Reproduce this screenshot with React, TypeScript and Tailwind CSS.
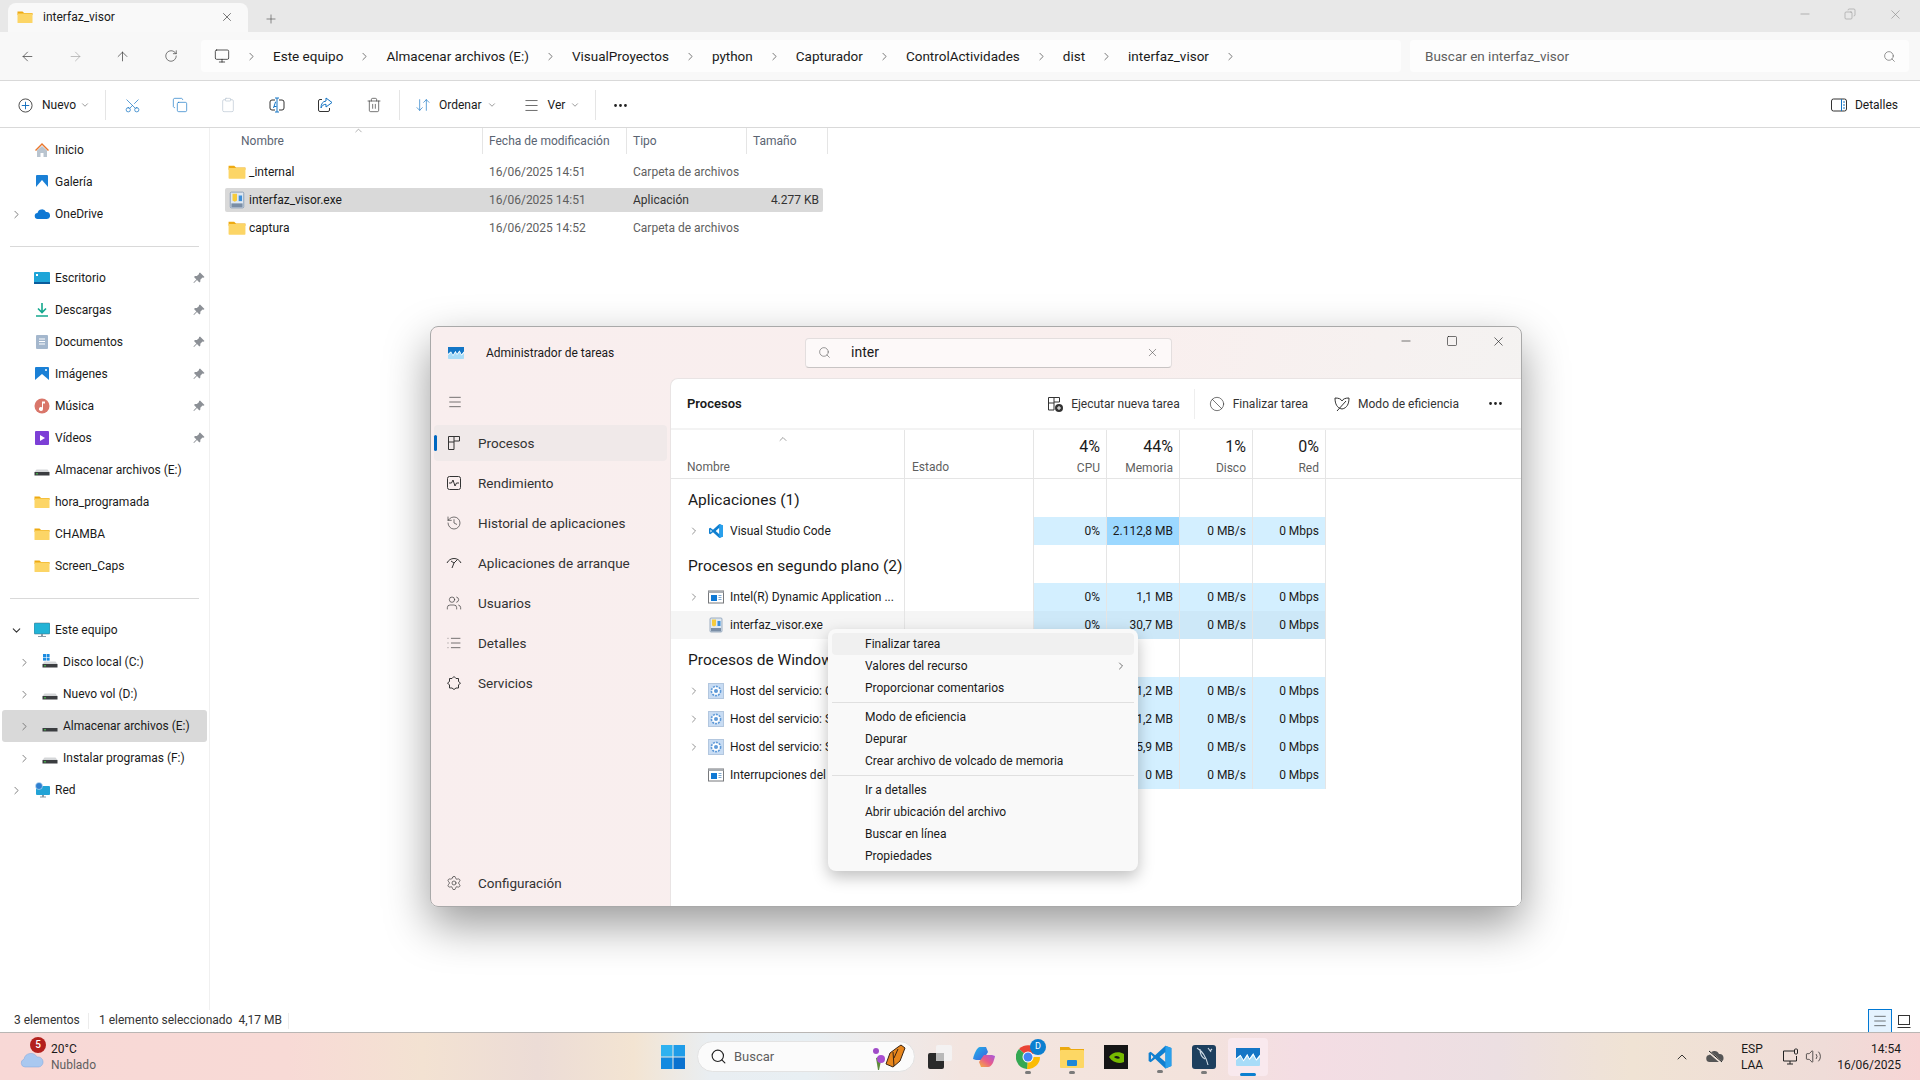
import {
  ArrowDownUp, ArrowLeft, ArrowRight, ArrowUp, Ban, ChevronDown, ChevronRight, ChevronUp, Clipboard, Copy, History,
  List, Menu, Minus, Monitor, MoreHorizontal, Plus, RotateCw, Scissors, Search, Settings, Square, Trash2, Users, Volume2, X,
} from "lucide-react";
import type { ReactNode } from "react";

function FolderIcon({ size = 16 }: { size?: number }) {
  return (
    <svg width={size} height={size} viewBox="0 0 16 16">
      <path d="M0.5 2.5h5l1.6 1.5h8.4v2h-15z" fill="#eeaa12" />
      <rect x="0.5" y="4.5" width="15" height="9.5" rx="0.6" fill="#fcd566" />
    </svg>
  );
}

function ExeIcon({ size = 16 }: { size?: number }) {
  return (
    <svg width={size} height={size} viewBox="0 0 16 16">
      <rect x="2" y="1" width="12" height="14" rx="1" fill="#dfe8f2" stroke="#7c93ad" strokeWidth="0.7" />
      <path d="M4 2.5h4v6l-2 1-2-1z" fill="#f6cb3c" />
      <rect x="3" y="11" width="10" height="3.4" fill="#7a8ea6" />
      <rect x="9.5" y="4" width="3" height="5" fill="#3f8fd8" />
    </svg>
  );
}

function VsCodeIcon({ size = 16 }: { size?: number }) {
  return (
    <svg width={size} height={size} viewBox="0 0 24 24">
      <path fillRule="evenodd" d="M17 1.5 7.5 10.3 3.4 7.2 1.5 8.2v7.6l1.9 1 4.1-3.1L17 22.5l5.5-2.3V3.8zM17 7.3 11.6 12l5.4 4.7zM3.7 9.6 6 12l-2.3 2.4z" fill="#0f7fd0" />
      <path d="M17 1.5 22.5 3.8v16.4L17 22.5z" fill="#29a0ec" />
    </svg>
  );
}

function ProcessIcon() {
  return (
    <svg width="16" height="16" viewBox="0 0 16 16">
      <rect x="0.5" y="2" width="15" height="12" fill="#fff" stroke="#77797c" />
      <rect x="0.5" y="2" width="15" height="2" fill="#a9adb2" />
      <rect x="3" y="6" width="6" height="6" fill="#0f78d4" />
      <path d="M10.5 6.5h3M10.5 8.5h3M10.5 10.5h3" stroke="#7fa7cc" />
    </svg>
  );
}

function ServiceIcon() {
  return (
    <svg width="16" height="16" viewBox="0 0 16 16">
      <rect x="0.5" y="0.5" width="15" height="15" fill="#c8dcf3" stroke="#b3c7df" />
      <circle cx="8" cy="8" r="4.6" fill="#fff" stroke="#5f9ad8" strokeWidth="1.6" strokeDasharray="2 1" />
      <circle cx="8" cy="8" r="2" fill="#5f9ad8" />
    </svg>
  );
}

function DriveIcon({ windows = false }: { windows?: boolean }) {
  return (
    <svg width="16" height="16" viewBox="0 0 16 16">
      {windows && (
        <g fill="#1b8be0">
          <rect x="1" y="0" width="3" height="3" />
          <rect x="4.6" y="0" width="3" height="3" />
          <rect x="1" y="3.6" width="3" height="3" />
          <rect x="4.6" y="3.6" width="3" height="3" />
        </g>
      )}
      <path d="M2.5 7.5h11l2 2.5H0.5z" fill="#d5d7d9" />
      <rect x="0.5" y="10" width="15" height="3.5" fill="#3b3d40" />
      <rect x="2" y="11.3" width="2" height="1" fill="#49d04d" />
    </svg>
  );
}

function TaskMgrIcon({ size = 16 }: { size?: number }) {
  return (
    <svg width={size} height={size * 0.75} viewBox="0 0 32 24">
      <rect width="32" height="24" rx="1.5" fill="#a8dcf8" />
      <path d="M0 0h32v9l-5 6-4-8-5 7-3-6-5 8-4-7-6 5z" fill="#1476c6" />
      <path d="M0 14l6-5 4 7 5-8 3 6 5-7 4 8 5-6v3l-5 5-4-7-5 6-3-5-5 7-4-7-6 5z" fill="#fff" />
    </svg>
  );
}

function TreeRow({
  label, icon, level = 1, pinned, selected, open, arrow,
}: { label: string; icon: ReactNode; level?: 1 | 2; pinned?: boolean; selected?: boolean; open?: boolean; arrow?: boolean }) {
  return (
    <div className={`mx-[2px] flex h-8 items-center rounded-[3px] pr-[2px] ${level === 2 ? "pl-[14px]" : "pl-[6px]"} ${selected ? "bg-[#d9d9d9]" : ""}`}>
      <span className="flex w-4 justify-center text-[#6e6e6e]">
        {arrow && (open ? <ChevronDown size={13} strokeWidth={2} className="text-[#333]" /> : <ChevronRight size={13} strokeWidth={1.6} />)}
      </span>
      <span className="ml-[10px] flex w-4 justify-center">{icon}</span>
      <span className="ml-[5px] flex-1 text-xs text-[#1a1a1a]">{label}</span>
      {pinned && (
        <svg width="12" height="12" viewBox="0 0 12 12" fill="#8c9096">
          <path d="M7 0.5 11.5 5l-1 .8-1-.3L7.3 7.7 7.4 9.6 6.4 10.6 4 8 1 11l-.6-.6L3.4 7.4 1 5 2 4l1.9.1L6.1 2l-.2-.7z" />
        </svg>
      )}
    </div>
  );
}

function ToolbarDivider() {
  return <div className="h-[30px] w-px bg-[#e5e5e5]" />;
}

const crumbs = ["Este equipo", "Almacenar archivos (E:)", "VisualProyectos", "python", "Capturador", "ControlActividades", "dist", "interfaz_visor"];

const files = [
  { name: "_internal", date: "16/06/2025 14:51", type: "Carpeta de archivos", size: "", exe: false },
  { name: "interfaz_visor.exe", date: "16/06/2025 14:51", type: "Aplicación", size: "4.277 KB", exe: true },
  { name: "captura", date: "16/06/2025 14:52", type: "Carpeta de archivos", size: "", exe: false },
];

function Explorer() {
  return (
    <div className="flex min-h-0 flex-1 flex-col bg-white">
      <div className="flex h-8 items-end bg-[#e8e8e8] pl-2">
        <div className="flex h-[29px] w-[240px] items-center rounded-t-lg bg-[#f9f9f9] pb-[2px] pl-[9px] pr-[14px]">
          <FolderIcon />
          <span className="ml-[10px] flex-1 text-xs">interfaz_visor</span>
          <X size={14} strokeWidth={1} />
        </div>
        <div className="mb-[6px] ml-4 text-[#444]"><Plus size={14} strokeWidth={1} /></div>
        <div className="mb-[6px] ml-auto flex h-6 items-center gap-8 pr-[17px] text-[#8a8a8a]">
          <Minus size={14} strokeWidth={1} />
          <Copy size={12} strokeWidth={1} className="-scale-x-100" />
          <X size={15} strokeWidth={1} />
        </div>
      </div>

      <div className="flex h-[49px] items-center border-b border-[#d9d9d9] bg-[#f8f8f8]">
        <div className="flex w-[201px] items-center pl-5 text-[#333]">
          <ArrowLeft size={15} strokeWidth={1.1} />
          <ArrowRight size={15} strokeWidth={1.1} className="ml-[33px] text-[#a3a3a3]" />
          <ArrowUp size={15} strokeWidth={1.1} className="ml-[32px]" />
          <RotateCw size={14} strokeWidth={1.1} className="ml-[34px]" />
        </div>
        <div className="flex h-8 w-[1200px] items-center rounded bg-[#fdfdfd] pl-[13px]">
          <Monitor size={16} strokeWidth={1.1} />
          {crumbs.map((c) => (
            <div key={c} className="flex items-center">
              <ChevronRight size={13} strokeWidth={1.2} className="mx-[15px] text-[#333]" />
              <span className="text-[13.5px] text-[#1a1a1a]">{c}</span>
            </div>
          ))}
          <ChevronRight size={13} strokeWidth={1.2} className="mx-[15px] text-[#333]" />
        </div>
        <div className="ml-[9px] flex h-8 w-[499px] items-center justify-between rounded bg-[#fdfdfd] pl-[15px] pr-[13px] text-[#5f5f5f]">
          <span className="text-[13.5px]">Buscar en interfaz_visor</span>
          <Search size={13} strokeWidth={1.2} />
        </div>
      </div>

      <div className="flex h-[47px] items-center border-b border-[#d9d9d9] pl-[18px] pr-[22px] pt-[2px]">
        <svg width="15" height="15" viewBox="0 0 16 16" fill="none" stroke="#0f6cbd" strokeWidth="1"><circle cx="8" cy="8" r="7" stroke="#444" /><path d="M8 4v8M4 8h8" /></svg>
        <span className="ml-[9px] text-xs">Nuevo</span>
        <ChevronDown size={10} className="ml-[4px] text-[#888]" />
        <div className="ml-[15px]"><ToolbarDivider /></div>
        <Scissors size={17} strokeWidth={1} className="ml-[18px] -rotate-90 text-[#1474c4]" />
        <Copy size={16} strokeWidth={1} className="ml-[31px] text-[#1474c4]" />
        <Clipboard size={16} strokeWidth={1} className="ml-[32px] text-[#b9c6d2]" />
        <svg width="16" height="16" viewBox="0 0 16 16" fill="none" stroke="#333" strokeWidth="1" className="ml-[33px]"><path d="M6 3H3a2 2 0 0 0-2 2v6a2 2 0 0 0 2 2h3M10 3h3a2 2 0 0 1 2 2v6a2 2 0 0 1-2 2h-3" /><path d="M8 1v14M6 1h4M6 15h4" stroke="#1474c4" /><path d="M4.500 11 6.500 5h.5M5 9.500h2.500" stroke="#1474c4" /></svg>
        <svg width="16" height="16" viewBox="0 0 16 16" fill="none" stroke="#333" strokeWidth="1" className="ml-[32px]"><path d="M5 2.500H3a1.500 1.500 0 0 0-1.500 1.500v9A1.500 1.500 0 0 0 3 14.500h8a1.500 1.500 0 0 0 1.500-1.500v-2" /><path d="M9 1l6 4.500L9 10V7.300C6.500 7.300 5 8.500 4 11c0-4 1.500-6.500 5-7z" stroke="#1474c4" /></svg>
        <Trash2 size={16} strokeWidth={1} className="ml-[33px] text-[#333]" />
        <div className="ml-[17px]"><ToolbarDivider /></div>
        <ArrowDownUp size={16} strokeWidth={1} className="ml-[15px] text-[#1474c4]" />
        <span className="ml-[8px] text-xs">Ordenar</span>
        <ChevronDown size={10} className="ml-[5px] text-[#888]" />
        <Menu size={17} strokeWidth={1} className="ml-[26px] text-[#333]" />
        <span className="ml-[8px] text-xs">Ver</span>
        <ChevronDown size={10} className="ml-[5px] text-[#888]" />
        <div className="ml-[15px]"><ToolbarDivider /></div>
        <MoreHorizontal size={17} strokeWidth={2} className="ml-[16px] text-[#222]" />
        <div className="ml-auto flex items-center">
          <svg width="16" height="16" viewBox="0 0 16 16" fill="none" stroke="#333"><rect x="0.5" y="2" width="15" height="12" rx="2" /><path d="M10.5 2v12" stroke="#1474c4" /><path d="M12 5h2M12 8h2M12 11h2" stroke="#1474c4" /></svg>
          <span className="ml-[8px] text-xs">Detalles</span>
        </div>
      </div>

      <div className="flex min-h-0 flex-1">
        <div className="w-[210px] border-r border-[#f0f0f0] pt-[6px]">
          <TreeRow label="Inicio" icon={<svg width="16" height="16" viewBox="0 0 16 16"><path d="M8 1 1 8l1 1 6-6 6 6 1-1z" fill="#e8762c" /><path d="M3 8.5 8 4l5 4.5V15H9.5v-4h-3v4H3z" fill="#b9c4cf" /></svg>} />
          <TreeRow label="Galería" icon={<svg width="16" height="16" viewBox="0 0 16 16"><rect x="2" y="1" width="12" height="14" rx="1" fill="#1a80d6" /><path d="M2 13 8 6l6 7v2H2z" fill="#fff" /></svg>} />
          <TreeRow label="OneDrive" arrow icon={<svg width="16" height="16" viewBox="0 0 16 16"><path d="M4 13a3 3 0 0 1-.5-6A4.5 4.5 0 0 1 12 6a3.5 3.5 0 0 1 1 7z" fill="#0f78d4" /></svg>} />
          <div className="mx-[10px] mb-[15px] mt-4 h-px bg-[#d9d9d9]" />
          <TreeRow label="Escritorio" pinned icon={<svg width="16" height="16" viewBox="0 0 16 16"><rect y="2" width="16" height="12" rx="1" fill="#1ea5d8" /><rect y="12" width="16" height="2" fill="#0a5c9c" /><rect x="2" y="4" width="2" height="2" fill="#fff" /></svg>} />
          <TreeRow label="Descargas" pinned icon={<svg width="16" height="16" viewBox="0 0 16 16" fill="none" stroke="#14a88e" strokeWidth="1.6"><path d="M8 1v9M4 6.5 8 10.5l4-4M2 14h12" /></svg>} />
          <TreeRow label="Documentos" pinned icon={<svg width="16" height="16" viewBox="0 0 16 16"><rect x="2" y="1" width="12" height="14" rx="1" fill="#a4b7cd" /><path d="M5 5h6M5 7.500h6M5 10h6" stroke="#fff" /></svg>} />
          <TreeRow label="Imágenes" pinned icon={<svg width="16" height="16" viewBox="0 0 16 16"><rect x="1" y="1" width="14" height="14" rx="1" fill="#1a80d6" /><path d="M1 14 8 8l7 6v1H1z" fill="#fff" /><circle cx="12" cy="4" r="1" fill="#fff" /></svg>} />
          <TreeRow label="Música" pinned icon={<svg width="16" height="16" viewBox="0 0 16 16"><circle cx="8" cy="8" r="7.500" fill="#d9766a" /><path d="M8 3.500h3v2H9v5.500a2 2 0 1 1-1-1.700z" fill="#fff" /></svg>} />
          <TreeRow label="Vídeos" pinned icon={<svg width="16" height="16" viewBox="0 0 16 16"><rect x="1" y="1" width="14" height="14" rx="1" fill="#7c3fd6" /><path d="M6 5v6l5-3z" fill="#fff" /></svg>} />
          <TreeRow label="Almacenar archivos (E:)" icon={<DriveIcon />} />
          <TreeRow label="hora_programada" icon={<FolderIcon />} />
          <TreeRow label="CHAMBA" icon={<FolderIcon />} />
          <TreeRow label="Screen_Caps" icon={<FolderIcon />} />
          <div className="mx-[10px] mb-[15px] mt-4 h-px bg-[#d9d9d9]" />
          <TreeRow label="Este equipo" arrow open icon={<svg width="16" height="16" viewBox="0 0 16 16"><rect y="1" width="16" height="11" rx="1" fill="#22b3d6" stroke="#4b6b7a" strokeWidth="0.5" /><path d="M7 12h2v2h3v1H4v-1h3z" fill="#8a9aa5" /></svg>} />
          <TreeRow label="Disco local (C:)" level={2} arrow icon={<DriveIcon windows />} />
          <TreeRow label="Nuevo vol (D:)" level={2} arrow icon={<DriveIcon />} />
          <TreeRow label="Almacenar archivos (E:)" level={2} arrow selected icon={<DriveIcon />} />
          <TreeRow label="Instalar programas (F:)" level={2} arrow icon={<DriveIcon />} />
          <TreeRow label="Red" arrow icon={<svg width="16" height="16" viewBox="0 0 16 16"><rect x="2" y="4" width="14" height="9" rx="1" fill="#22a3d6" /><path d="M8 13h2v1.500h2v1H6v-1h2z" fill="#8a9aa5" /><circle cx="5" cy="4" r="3.500" fill="#2f7fd0" stroke="#cfe8f7" strokeWidth="0.6" /></svg>} />
        </div>

        <div className="relative flex-1">
          <ChevronUp size={11} strokeWidth={1} className="absolute left-[143px] top-[-3px] text-[#555]" />
          <div className="flex h-[26px] text-xs text-[#5a6472]">
            <div className="w-[273px] border-r border-[#e5e5e5] pl-[31px] leading-[26px]">Nombre</div>
            <div className="w-[144px] border-r border-[#e5e5e5] pl-[6px] leading-[26px]">Fecha de modificación</div>
            <div className="w-[120px] border-r border-[#e5e5e5] pl-[6px] leading-[26px]">Tipo</div>
            <div className="w-[81px] border-r border-[#e5e5e5] pl-[6px] leading-[26px]">Tamaño</div>
          </div>
          <div className="ml-[15px] mt-[6px] flex w-[598px] flex-col gap-1">
            {files.map((f) => (
              <div key={f.name} className={`flex h-6 items-center rounded-[2px] text-xs ${f.exe ? "bg-[#d9d9d9]" : ""}`}>
                <div className="flex w-[264px] items-center gap-[3px] pl-[3px] text-[#1a1a1a]">
                  {f.exe ? <ExeIcon size={18} /> : <FolderIcon size={18} />}
                  <span>{f.name}</span>
                </div>
                <div className="w-[144px] text-[#5f5f5f]">{f.date}</div>
                <div className={`w-[120px] ${f.exe ? "text-[#333]" : "text-[#5f5f5f]"}`}>{f.type}</div>
                <div className="w-[66px] text-right text-[#333]">{f.size}</div>
              </div>
            ))}
          </div>
        </div>
      </div>

      <div className="flex h-[22px] items-center text-xs text-[#333]">
        <span className="mb-[2px] ml-[14px] w-[74px] whitespace-nowrap">3 elementos</span>
        <div className="h-4 w-px bg-[#ececec]" />
        <span className="mb-[2px] ml-[10px] w-[179px] whitespace-nowrap">1 elemento seleccionado&nbsp; 4,17 MB</span>
        <div className="ml-[10px] h-4 w-px bg-[#ececec]" />
        <div className="ml-auto flex items-center pr-2">
          <div className="flex h-6 w-6 items-center justify-center border border-[#0078d4] bg-[#e5f3ff]">
            <Menu size={16} strokeWidth={1} className="text-[#333]" />
          </div>
          <svg width="16" height="16" viewBox="0 0 16 16" fill="none" stroke="#333" className="ml-[4px]"><rect x="2.500" y="2.500" width="11" height="9" /><path d="M1.500 14.500h13" /></svg>
        </div>
      </div>
    </div>
  );
}

const navItems = [
  { label: "Procesos", active: true, icon: <svg width="16" height="16" viewBox="0 0 16 16" fill="none" stroke="#333"><path d="M2.500 1.500h11v4.500h-5.500v8.500h-5.500zM2.500 7h5.500M8 1.500v4.500" /></svg> },
  { label: "Rendimiento", icon: <svg width="16" height="16" viewBox="0 0 16 16" fill="none" stroke="#333"><rect x="1.500" y="1.500" width="13" height="13" rx="2" /><path d="M3 8h2.500l1.500-3 2 6 1.500-3H13" /></svg> },
  { label: "Historial de aplicaciones", icon: <History size={16} strokeWidth={1} /> },
  { label: "Aplicaciones de arranque", icon: <svg width="16" height="16" viewBox="0 0 16 16" fill="none" stroke="#333"><path d="M1 8c1.500-3 4-4.500 7-4.500S13.500 5 15 8M5 6l3 2 3-3M8 8l-2 5" /></svg> },
  { label: "Usuarios", icon: <Users size={16} strokeWidth={1} /> },
  { label: "Detalles", icon: <List size={16} strokeWidth={1} /> },
  { label: "Servicios", icon: <svg width="16" height="16" viewBox="0 0 16 16" fill="none" stroke="#333"><path d="M8 1.500 10 3.500h2.500v3L14.500 8l-2 2v3H10l-2 1.500L6 13H3.500v-3L1.500 8l2-1.500v-3H6z" /></svg> },
];

type ProcRow = { name: string; icon: ReactNode; arrow: boolean; cpu: string; mem: string; disk: string; net: string; hot?: boolean; hover?: boolean };

const rowGroups: { title: string; rows: ProcRow[] }[] = [
  { title: "Aplicaciones (1)", rows: [{ name: "Visual Studio Code", icon: <VsCodeIcon />, arrow: true, cpu: "0%", mem: "2.112,8 MB", disk: "0 MB/s", net: "0 Mbps", hot: true }] },
  {
    title: "Procesos en segundo plano (2)",
    rows: [
      { name: "Intel(R) Dynamic Application ...", icon: <ProcessIcon />, arrow: true, cpu: "0%", mem: "1,1 MB", disk: "0 MB/s", net: "0 Mbps" },
      { name: "interfaz_visor.exe", icon: <ExeIcon />, arrow: false, cpu: "0%", mem: "30,7 MB", disk: "0 MB/s", net: "0 Mbps", hover: true },
    ],
  },
  {
    title: "Procesos de Windows (4)",
    rows: [
      { name: "Host del servicio: Capability Access", icon: <ServiceIcon />, arrow: true, cpu: "0%", mem: "1,2 MB", disk: "0 MB/s", net: "0 Mbps" },
      { name: "Host del servicio: Sistema", icon: <ServiceIcon />, arrow: true, cpu: "0%", mem: "1,2 MB", disk: "0 MB/s", net: "0 Mbps" },
      { name: "Host del servicio: Sysmain", icon: <ServiceIcon />, arrow: true, cpu: "0%", mem: "5,9 MB", disk: "0 MB/s", net: "0 Mbps" },
      { name: "Interrupciones del sistema", icon: <ProcessIcon />, arrow: false, cpu: "0%", mem: "0 MB", disk: "0 MB/s", net: "0 Mbps" },
    ],
  },
];

function HeadMetric({ pct, label }: { pct: string; label: string }) {
  return (
    <div className="flex w-[73px] flex-col items-end border-r border-[#e5e5e5] pr-[6px] pt-[7px]">
      <span className="text-base leading-5 text-[#1a1a1a]">{pct}</span>
      <span className="mt-[1px] text-xs leading-5 text-[#5f5f5f]">{label}</span>
    </div>
  );
}

function MetricCell({ value, hot, hover }: { value: string; hot?: boolean; hover?: boolean }) {
  const bg = hot ? "bg-[#9cd8ff]" : hover ? "bg-[#cde8f8]" : "bg-[#d3efff]";
  return <div className={`flex w-[73px] items-center justify-end border-r border-[#e5e5e5] pr-[6px] ${bg}`}>{value}</div>;
}

function ContextMenu() {
  const item = "flex h-[22px] items-center rounded pl-[33px] text-xs text-[#1a1a1a]";
  const sep = "my-[3px] h-px bg-[#e0e0e0]";
  return (
    <div className="absolute left-[397px] top-[302px] h-[242px] w-[310px] rounded-lg bg-[#f9f9f9] p-1 shadow-[0_6px_16px_rgba(0,0,0,0.25)]">
      <div className={`${item} bg-[#f0f0f0]`}>Finalizar tarea</div>
      <div className={`${item} justify-between pr-[7px]`}>Valores del recurso<ChevronRight size={12} strokeWidth={1.2} /></div>
      <div className={item}>Proporcionar comentarios</div>
      <div className={sep} />
      <div className={item}>Modo de eficiencia</div>
      <div className={item}>Depurar</div>
      <div className={item}>Crear archivo de volcado de memoria</div>
      <div className={sep} />
      <div className={item}>Ir a detalles</div>
      <div className={item}>Abrir ubicación del archivo</div>
      <div className={item}>Buscar en línea</div>
      <div className={item}>Propiedades</div>
    </div>
  );
}

function TaskManager() {
  return (
    <div className="absolute left-[430px] top-[326px] flex h-[581px] w-[1092px] flex-col overflow-hidden rounded-lg border border-[#a9a9a9] bg-[linear-gradient(100deg,#f9eeee_0%,#f9efee_60%,#f3f3f2_100%)] shadow-[0_18px_45px_rgba(0,0,0,0.4)]">
      <div className="flex h-[51px] shrink-0 items-center">
        <div className="ml-[17px]"><TaskMgrIcon size={16} /></div>
        <span className="ml-[22px] w-[319px] text-xs text-[#1a1a1a]">Administrador de tareas</span>
        <div className="flex h-[30px] w-[367px] items-center rounded border border-[#e3dede] border-b-[#c8c4c4] bg-[#fdf9f9] pl-3 pr-3">
          <Search size={13} strokeWidth={1.2} className="text-[#666]" />
          <span className="mb-px ml-5 flex-1 text-sm text-[#1a1a1a]">inter</span>
          <X size={13} strokeWidth={1} className="text-[#444]" />
        </div>
        <div className="mb-[22px] ml-auto flex text-[#1a1a1a]">
          <div className="flex w-[46px] justify-center"><Minus size={14} strokeWidth={1} /></div>
          <div className="flex w-[46px] justify-center"><Square size={12} strokeWidth={1.2} className="my-px" /></div>
          <div className="flex w-[46px] justify-center"><X size={15} strokeWidth={1} /></div>
        </div>
      </div>

      <div className="flex min-h-0 flex-1">
        <div className="flex w-[239px] shrink-0 flex-col pb-[5px] text-[13.5px] text-[#333]">
          <div className="flex h-[47px] items-center pl-[16px]"><Menu size={16} strokeWidth={1} /></div>
          <div className="flex flex-col gap-1">
            {navItems.map((n) => (
              <div key={n.label} className={`relative mx-[3px] flex h-9 items-center gap-4 rounded pl-3 ${n.active ? "bg-[#f0e9e9]" : ""}`}>
                {n.active && <div className="absolute left-0 top-[10px] h-4 w-[3px] rounded bg-[#0067c0]" />}
                {n.icon}
                <span>{n.label}</span>
              </div>
            ))}
          </div>
          <div className="mx-[3px] mt-auto flex h-9 items-center gap-4 pl-3">
            <Settings size={16} strokeWidth={1} />
            <span>Configuración</span>
          </div>
        </div>

        <div className="flex min-w-0 flex-1 flex-col rounded-tl-lg border-l border-t border-[#e9e4e4] bg-white">
          <div className="flex h-[49px] shrink-0 items-center whitespace-nowrap pl-4 pr-[17px] text-xs text-[#333]">
            <span className="flex-1 text-[13px] font-semibold text-[#1a1a1a]">Procesos</span>
            <svg width="16" height="16" viewBox="0 0 16 16" fill="none" stroke="#333"><path d="M1.500 1.500h11v4.500h-5.500v8h-5.500zM1.500 7h5.500M7 1.500V6" /><circle cx="12" cy="12" r="4" fill="#333" stroke="none" /><path d="M12 10v4M10 12h4" stroke="#fff" /></svg>
            <span className="ml-2">Ejecutar nueva tarea</span>
            <div className="ml-[14px] h-[30px] w-px bg-[#eee]" />
            <Ban size={16} strokeWidth={1} className="ml-[14px]" />
            <span className="ml-2">Finalizar tarea</span>
            <svg width="16" height="16" viewBox="0 0 16 16" fill="none" stroke="#333" className="ml-[26px]"><path d="M1 2c4 0 6 1 7 3 1-2 3-3 7-3 0 6-2 10-7 11C3 12 1 8 1 2zM3 15 12 5" /></svg>
            <span className="ml-2">Modo de eficiencia</span>
            <MoreHorizontal size={17} strokeWidth={2} className="ml-[28px] text-[#222]" />
          </div>
          <div className="h-[2px] shrink-0 bg-[#f3f3f3]" />

          <div className="flex h-[49px] shrink-0 border-b border-[#e5e5e5] text-xs text-[#5f5f5f]">
            <div className="relative flex w-[234px] items-end border-r border-[#e5e5e5] pb-[3px] pl-4">
              <ChevronUp size={12} strokeWidth={1.2} className="absolute left-[106px] top-[3px]" />
              Nombre
            </div>
            <div className="flex w-[129px] items-end border-r border-[#e5e5e5] pb-[3px] pl-[7px]">Estado</div>
            <HeadMetric pct="4%" label="CPU" />
            <HeadMetric pct="44%" label="Memoria" />
            <HeadMetric pct="1%" label="Disco" />
            <HeadMetric pct="0%" label="Red" />
          </div>

          {rowGroups.map((g) => (
            <div key={g.title}>
              <div className="flex h-[38px]">
                <div className="w-[234px] whitespace-nowrap border-r border-[#e5e5e5] pl-[17px] pt-[11px] text-[15.5px] leading-5 text-[#1a1a1a]">{g.title}</div>
                <div className="w-[129px] border-r border-[#e5e5e5]" />
                <div className="w-[73px] border-r border-[#e5e5e5]" />
                <div className="w-[73px] border-r border-[#e5e5e5]" />
                <div className="w-[73px] border-r border-[#e5e5e5]" />
                <div className="w-[73px] border-r border-[#e5e5e5]" />
              </div>
              {g.rows.map((r) => (
                <div key={r.name} className="flex h-7 text-xs text-[#1a1a1a]">
                  <div className={`flex w-[363px] items-center ${r.hover ? "bg-[#f5f5f5]" : ""}`}>
                    <div className="flex w-[234px] items-center self-stretch border-r border-[#e5e5e5] pl-[17px]">
                      <span className="flex w-3 justify-center text-[#666]">{r.arrow && <ChevronRight size={12} strokeWidth={1.4} />}</span>
                      <span className="ml-[8px] flex">{r.icon}</span>
                      <span className="ml-[6px] truncate">{r.name}</span>
                    </div>
                    <div className="h-full w-[129px] border-r border-[#e5e5e5]" />
                  </div>
                  <MetricCell value={r.cpu} hover={r.hover} />
                  <MetricCell value={r.mem} hot={r.hot} hover={r.hover} />
                  <MetricCell value={r.disk} hover={r.hover} />
                  <MetricCell value={r.net} hover={r.hover} />
                </div>
              ))}
            </div>
          ))}
        </div>
      </div>
      <ContextMenu />
    </div>
  );
}

function Taskbar() {
  return (
    <div className="flex h-[48px] shrink-0 items-center border-t border-[#b9b6b4] bg-[linear-gradient(90deg,#f8d8d6_0%,#f8dad6_15%,#f3e2d2_22%,#ecdcd6_28%,#f3e4d2_33%,#e9eef2_37%,#e8eff3_42%,#f3e5e0_50%,#f3e3dc_62%,#f4dde4_68%,#ecdfe2_78%,#f0e3d4_85%,#efdcd8_95%,#f7d5d5_100%)]">
      <div className="relative ml-[20px] w-[31px]">
        <svg width="24" height="18" viewBox="0 0 24 18" className="mt-[6px]"><path d="M5 16a4 4 0 0 1-1-7.800A7 7 0 0 1 17 6a5 5 0 0 1 2 10z" fill="#a9c8f0" stroke="#7fa6dc" strokeWidth="0.5" /></svg>
        <span className="absolute left-[10px] top-[-8px] flex h-4 w-4 items-center justify-center rounded-full bg-[#b3201d] text-[10px] font-medium text-white">5</span>
      </div>
      <div className="flex flex-col text-xs leading-4">
        <span className="text-[#1a1a1a]">20°C</span>
        <span className="text-[#5f5f5f]">Nublado</span>
      </div>

      <svg width="24" height="24" viewBox="0 0 24 24" className="ml-[565px]">
        <rect width="11.500" height="11.500" fill="#2fb2f0" />
        <rect x="12.500" width="11.500" height="11.500" fill="#1f9ce8" />
        <rect y="12.500" width="11.500" height="11.500" fill="#128ae0" />
        <rect x="12.500" y="12.500" width="11.500" height="11.500" fill="#0b72cf" />
      </svg>

      <div className="ml-3 flex h-[31px] w-[218px] items-center rounded-full border border-[#e3e3e3] bg-[#fbfbfb] pl-[12px] pr-[8px]">
        <Search size={17} strokeWidth={1.6} className="text-[#222]" />
        <span className="ml-[7px] flex-1 text-[13px] text-[#5f5f5f]">Buscar</span>
        <svg width="38" height="26" viewBox="0 0 38 26">
          <path d="M8 14l3-1 2 4-2 9h-1z" fill="#5e8a3a" />
          <circle cx="8" cy="7" r="3" fill="#a04cc8" /><circle cx="13" cy="15" r="4" fill="#a94fd0" />
          <path d="M18 20 22 9l8-6 3-2 4 3-5 13-7 6z" fill="#e7861c" stroke="#3a2414" />
          <path d="M25 8l1 14M30 5l-4 9" stroke="#3a2414" />
        </svg>
      </div>

      <div className="ml-[3px] flex items-center">
        <div className="flex w-[44px] justify-center">
          <div className="relative h-[24px] w-[24px]">
            <div className="absolute right-0 top-0 h-4 w-4 rounded-[2px] bg-[#f4f2f2]" />
            <div className="absolute bottom-0 left-0 h-4 w-4 rounded-[2px] bg-[#2a2a2a]" />
            <div className="absolute left-2 top-2 h-2 w-2 bg-[#b9b9b9]" />
          </div>
        </div>
        <div className="flex w-[44px] justify-center">
          <svg width="24" height="24" viewBox="0 0 24 24">
            <defs>
              <linearGradient id="cp1" x1="0" y1="0" x2="1" y2="1"><stop offset="0" stopColor="#1fb5e8" /><stop offset="1" stopColor="#3f5fe0" /></linearGradient>
              <linearGradient id="cp2" x1="0" y1="1" x2="1" y2="0"><stop offset="0" stopColor="#f6b33c" /><stop offset="0.5" stopColor="#e85a8a" /><stop offset="1" stopColor="#a45ae0" /></linearGradient>
            </defs>
            <path d="M8 2h6l2 5-5 8H4l-3-1C2 9 5 2 8 2z" fill="url(#cp1)" />
            <path d="M16 22h-7l-2-5 5-7h8l3 1c-1 5-3 11-7 11z" fill="url(#cp2)" />
          </svg>
        </div>
        <div className="relative flex w-[44px] justify-center">
          <svg width="24" height="24" viewBox="0 0 24 24">
            <path d="M12 12 3 4a12 12 0 0 1 19 2z" fill="#ea4335" />
            <path d="M12 12H24A12 12 0 0 1 11 24z" fill="#fbbc04" />
            <path d="M12 12 11 24A12 12 0 0 1 3 4z" fill="#34a853" />
            <circle cx="12" cy="12" r="5.500" fill="#fff" /><circle cx="12" cy="12" r="4.500" fill="#4285f4" />
          </svg>
          <span className="absolute left-[24px] top-[-6px] flex h-4 w-4 items-center justify-center rounded-full bg-[#0b7fd0] text-[9px] text-white">D</span>
          <span className="absolute top-[26px] h-[3px] w-[6px] rounded-full bg-[#7a7a7a]" />
        </div>
        <div className="relative flex w-[44px] justify-center">
          <svg width="24" height="24" viewBox="0 0 24 24">
            <path d="M0 2h9l2 2h13v4H0z" fill="#eca90f" /><rect y="5" width="24" height="18" rx="1" fill="#fdd764" /><rect x="7" y="15" width="10" height="6" rx="1" fill="#1e88d8" />
          </svg>
          <span className="absolute top-[26px] h-[3px] w-[6px] rounded-full bg-[#7a7a7a]" />
        </div>
        <div className="flex w-[44px] justify-center">
          <svg width="24" height="24" viewBox="0 0 24 24"><rect width="24" height="24" fill="#151515" /><path d="M5 12c3-5 10-6 15-3v8c-5 2-11 1-15-5zm5 0c2 2 5 2 6 1-1-2-4-3-6-1z" fill="#76b900" fillRule="evenodd" /></svg>
        </div>
        <div className="relative flex w-[44px] justify-center">
          <VsCodeIcon size={26} />
          <span className="absolute top-[26px] h-[3px] w-[6px] rounded-full bg-[#7a7a7a]" />
        </div>
        <div className="relative flex w-[44px] justify-center">
          <svg width="24" height="24" viewBox="0 0 24 24"><rect width="24" height="24" rx="3" fill="#1d3f5e" /><path d="M5 3c5 3 9 8 11 17M8 4c0 6 3 9 5 10M16 3l3 4M20 4l-2 2" fill="none" stroke="#cfdbe5" strokeWidth="1.1" /></svg>
          <span className="absolute top-[26px] h-[3px] w-[6px] rounded-full bg-[#7a7a7a]" />
        </div>
        <div className="flex w-[44px] justify-center">
          <div className="relative flex h-[38px] w-[40px] items-center justify-center rounded bg-[#f9e9ee]">
            <TaskMgrIcon size={24} />
            <span className="absolute bottom-0 h-[3px] w-4 rounded-full bg-[#0b7fd0]" />
          </div>
        </div>
      </div>

      <div className="ml-auto flex items-center pr-[19px] text-xs text-[#1a1a1a]">
        <ChevronUp size={16} strokeWidth={1.3} />
        <svg width="18" height="14" viewBox="0 0 18 14" className="ml-[16px]"><path d="M4 12a3.500 3.500 0 0 1-.5-7A5 5 0 0 1 13 4a4 4 0 0 1 1 8z" fill="#555" /><path d="M2 1l14 12" stroke="#f1e5dc" strokeWidth="2.500" /><path d="M3 1l13 11" stroke="#222" /></svg>
        <div className="ml-3 flex w-[32px] flex-col items-center leading-4"><span>ESP</span><span>LAA</span></div>
        <svg width="18" height="18" viewBox="0 0 18 18" fill="none" stroke="#222" className="ml-[14px]"><path d="M12 3H1.500v10h13V8M8 13v3M5 16h6" /><rect x="12.500" y="1" width="3" height="5" rx="1" /></svg>
        <Volume2 size={17} strokeWidth={1} className="ml-[5px]" />
        <div className="ml-[17px] flex w-[62px] flex-col items-end leading-4"><span>14:54</span><span>16/06/2025</span></div>
      </div>
    </div>
  );
}

export default function App() {
  return (
    <div className="relative flex h-[1080px] w-[1920px] flex-col overflow-hidden font-[Roboto,sans-serif] text-[#1a1a1a]">
      <Explorer />
      <Taskbar />
      <TaskManager />
    </div>
  );
}
